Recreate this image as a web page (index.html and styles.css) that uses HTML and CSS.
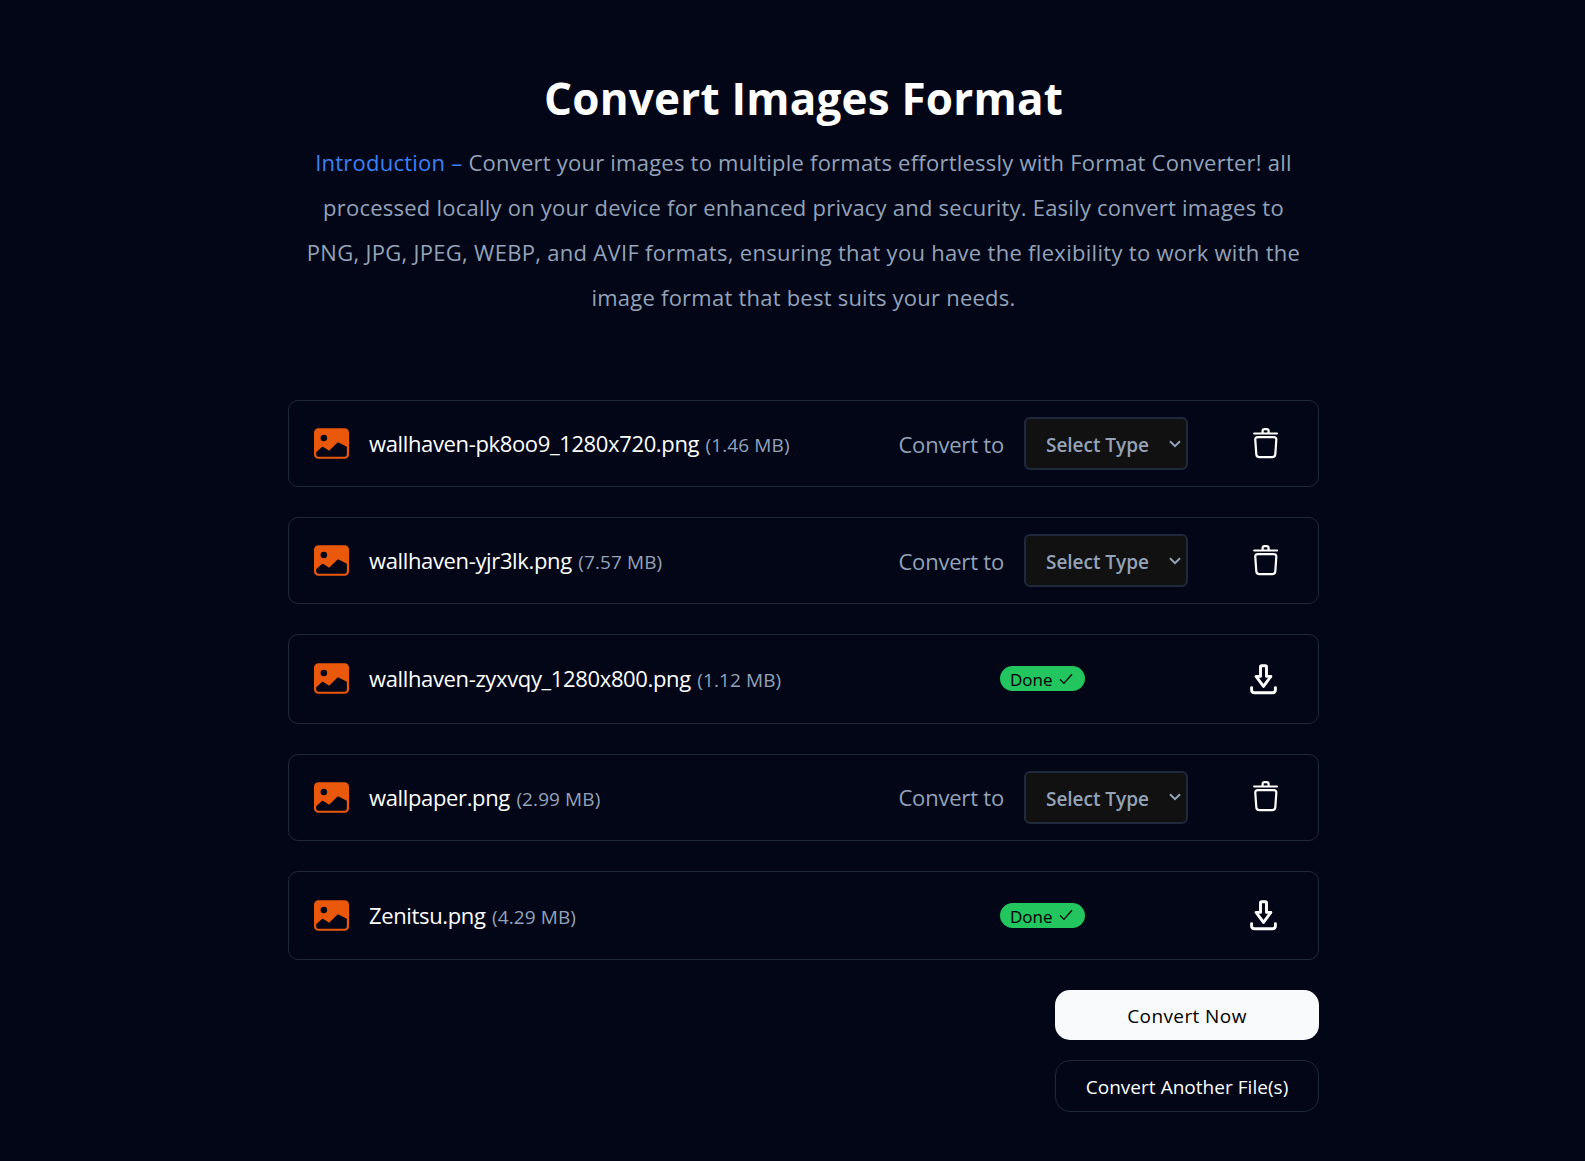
FILE: index.html
```html
<!DOCTYPE html>
<html lang="en">
<head>
<meta charset="utf-8">
<title>Convert Images Format</title>
<link rel="stylesheet" href="styles.css">
</head>
<body>
<svg class="sprite" aria-hidden="true">
  <symbol id="image" viewBox="0 1 16 14"><path fill="currentColor" d="M.002 3a2 2 0 0 1 2-2h12a2 2 0 0 1 2 2v10a2 2 0 0 1-2 2h-12a2 2 0 0 1-2-2zm1 9v1a1 1 0 0 0 1 1h12a1 1 0 0 0 1-1V9.5l-3.777-1.947a.5.5 0 0 0-.577.093l-3.71 3.71-2.66-1.772a.5.5 0 0 0-.63.062zm5-6.5a1.5 1.5 0 1 0-3 0 1.5 1.5 0 0 0 3 0"/></symbol>
  <symbol id="trash" viewBox="0 0 36 36"><g fill="none" stroke="currentColor" stroke-width="2.2" stroke-linecap="round" stroke-linejoin="round"><path d="M7.2 7.5h22.8M15.6 7.3V5.1q0-2 2-2h2q2 0 2 2v2.2"/><path d="M11 11.1h15.6q2.9 0 2.7 2.8l-1 14.4q-.3 2.8-3 2.8h-13q-2.7 0-3-2.8l-1-14.4q-.2-2.8 2.7-2.8z"/></g></symbol>
  <symbol id="download" viewBox="0 0 36 36"><g fill="none" stroke="currentColor" stroke-width="2.9" stroke-linecap="round" stroke-linejoin="round"><path d="M13.5 15.4V6q0-1.2 1.2-1.2h3.6q1.2 0 1.2 1.2v9.4h4.4l-7.4 10-7.4-10z"/><path d="M4.6 26.6v2.2q0 3 3 3h17.8q3 0 3-3v-2.2"/></g></symbol>
  <symbol id="chevron" viewBox="0 0 12 8"><path d="M1 1.2l5 5 5-5" fill="none" stroke="currentColor" stroke-width="2"/></symbol>
  <symbol id="check" viewBox="0 0 14 12"><path d="M1 6.4l3.9 4L13 1.2" fill="none" stroke="currentColor" stroke-width="1.3"/></symbol>
</svg>
<main class="page">
  <header class="intro">
    <h1 class="title">Convert Images Format</h1>
    <p class="lead"><span class="accent">Introduction –</span> Convert your images to multiple formats effortlessly with Format Converter! all<br>processed locally on your device for enhanced privacy and security. Easily convert images to<br><span class="wide">PNG, JPG, JPEG, WEBP, and AVIF formats, ensuring that you have the flexibility to work with the</span><br>image format that best suits your needs.</p>
  </header>

  <section class="files">
    <article class="file">
      <svg class="thumb"><use href="#image"/></svg>
      <p class="name">wallhaven-pk8oo9_1280x720.png<span class="size">(1.46 MB)</span></p>
      <label class="convert"><span class="caption">Convert to</span>
        <span class="picker"><select class="select"><option>Select Type</option></select><svg class="chevron"><use href="#chevron"/></svg></span>
      </label>
      <svg class="action"><use href="#trash"/></svg>
    </article>
    <article class="file">
      <svg class="thumb"><use href="#image"/></svg>
      <p class="name">wallhaven-yjr3lk.png<span class="size">(7.57 MB)</span></p>
      <label class="convert"><span class="caption">Convert to</span>
        <span class="picker"><select class="select"><option>Select Type</option></select><svg class="chevron"><use href="#chevron"/></svg></span>
      </label>
      <svg class="action"><use href="#trash"/></svg>
    </article>
    <article class="file file-done">
      <svg class="thumb"><use href="#image"/></svg>
      <p class="name">wallhaven-zyxvqy_1280x800.png<span class="size">(1.12 MB)</span></p>
      <span class="badge">Done<svg class="check"><use href="#check"/></svg></span>
      <svg class="action"><use href="#download"/></svg>
    </article>
    <article class="file">
      <svg class="thumb"><use href="#image"/></svg>
      <p class="name">wallpaper.png<span class="size">(2.99 MB)</span></p>
      <label class="convert"><span class="caption">Convert to</span>
        <span class="picker"><select class="select"><option>Select Type</option></select><svg class="chevron"><use href="#chevron"/></svg></span>
      </label>
      <svg class="action"><use href="#trash"/></svg>
    </article>
    <article class="file file-done">
      <svg class="thumb"><use href="#image"/></svg>
      <p class="name">Zenitsu.png<span class="size">(4.29 MB)</span></p>
      <span class="badge">Done<svg class="check"><use href="#check"/></svg></span>
      <svg class="action"><use href="#download"/></svg>
    </article>
  </section>

  <div class="buttons">
    <button class="btn btn-primary">Convert Now</button>
    <button class="btn btn-outline">Convert Another File(s)</button>
  </div>
</main>
</body>
</html>
```
FILE: styles.css
```css
* { box-sizing: border-box; }
body {
  margin: 0;
  background: #020617;
  color: #fff;
  font-family: "Open Sans", "Noto Sans", sans-serif;
}
.sprite { display: none; }
h1, p { margin: 0; }
.page {
  width: 1031px;
  margin-left: 288px;
  padding-top: 68px;
  display: flex;
  flex-direction: column;
}
.intro { text-align: center; }
.title {
  font-size: 44px;
  line-height: 60px;
  font-weight: 700;
  letter-spacing: 0.22px;
}
.lead {
  margin-top: 12px;
  font-size: 22px;
  line-height: 45px;
  letter-spacing: 0.23px;
  white-space: nowrap;
  color: #94a3b8;
}
.accent { color: #3b82f6; }
.wide { letter-spacing: 0.3px; }

.files {
  margin-top: 80px;
  display: flex;
  flex-direction: column;
  gap: 30px;
}
.file {
  height: 87px;
  display: flex;
  align-items: center;
  padding: 0 35px 0 25px;
  border: 1px solid #1e293b;
  border-radius: 10px;
}
.file-done { height: 89.5px; }
.thumb {
  width: 35px;
  height: 31px;
  margin-right: 20px;
  color: #ea580c;
}
.name {
  flex: 1;
  padding-top: 1px;
  font-size: 22px;
  line-height: 30px;
  letter-spacing: -0.36px;
  white-space: nowrap;
}
.size {
  margin-left: 6.5px;
  font-size: 19px;
  letter-spacing: 0.1px;
  color: #94a3b8;
}
.convert {
  display: flex;
  align-items: center;
  gap: 20px;
  margin-right: 59px;
  font-size: 22px;
  letter-spacing: -0.2px;
  color: #94a3b8;
}
.caption { line-height: 30px; }
.picker {
  width: 164px;
  height: 53px;
  display: grid;
  align-items: center;
}
.select, .chevron { grid-area: 1 / 1; }
.select {
  width: 100%;
  height: 100%;
  appearance: none;
  padding: 3px 0 0 20px;
  border: 2px solid #1e293b;
  border-radius: 6px;
  background: #111;
  color: #94a3b8;
  font: 600 19px "Open Sans", "Noto Sans", sans-serif;
  letter-spacing: -0.03px;
}
.chevron {
  width: 12px;
  height: 8px;
  justify-self: end;
  margin-right: 7px;
  pointer-events: none;
}
.action {
  width: 36px;
  height: 36px;
}
.badge {
  width: 85px;
  height: 25px;
  display: flex;
  align-items: center;
  gap: 6px;
  margin-right: 162px;
  padding: 2px 0 0 10px;
  border-radius: 13px;
  background: #22c55e;
  color: #000;
  font-size: 17px;
  line-height: 23px;
}
.check {
  width: 14px;
  height: 12px;
  margin-bottom: 2px;
}

.buttons {
  margin-top: 30px;
  display: flex;
  flex-direction: column;
  align-items: flex-end;
  gap: 20px;
}
.btn {
  width: 264px;
  height: 50px;
  padding: 2px 0 0;
  border: 0;
  border-radius: 15px;
  font: 400 19px "Open Sans", "Noto Sans", sans-serif;
}
.btn-primary {
  background: #f8fafc;
  color: #000;
  letter-spacing: 0.4px;
}
.btn-outline {
  height: 52px;
  border: 1px solid #1e293b;
  background: #020617;
  color: #fff;
  letter-spacing: 0.03px;
}
```
